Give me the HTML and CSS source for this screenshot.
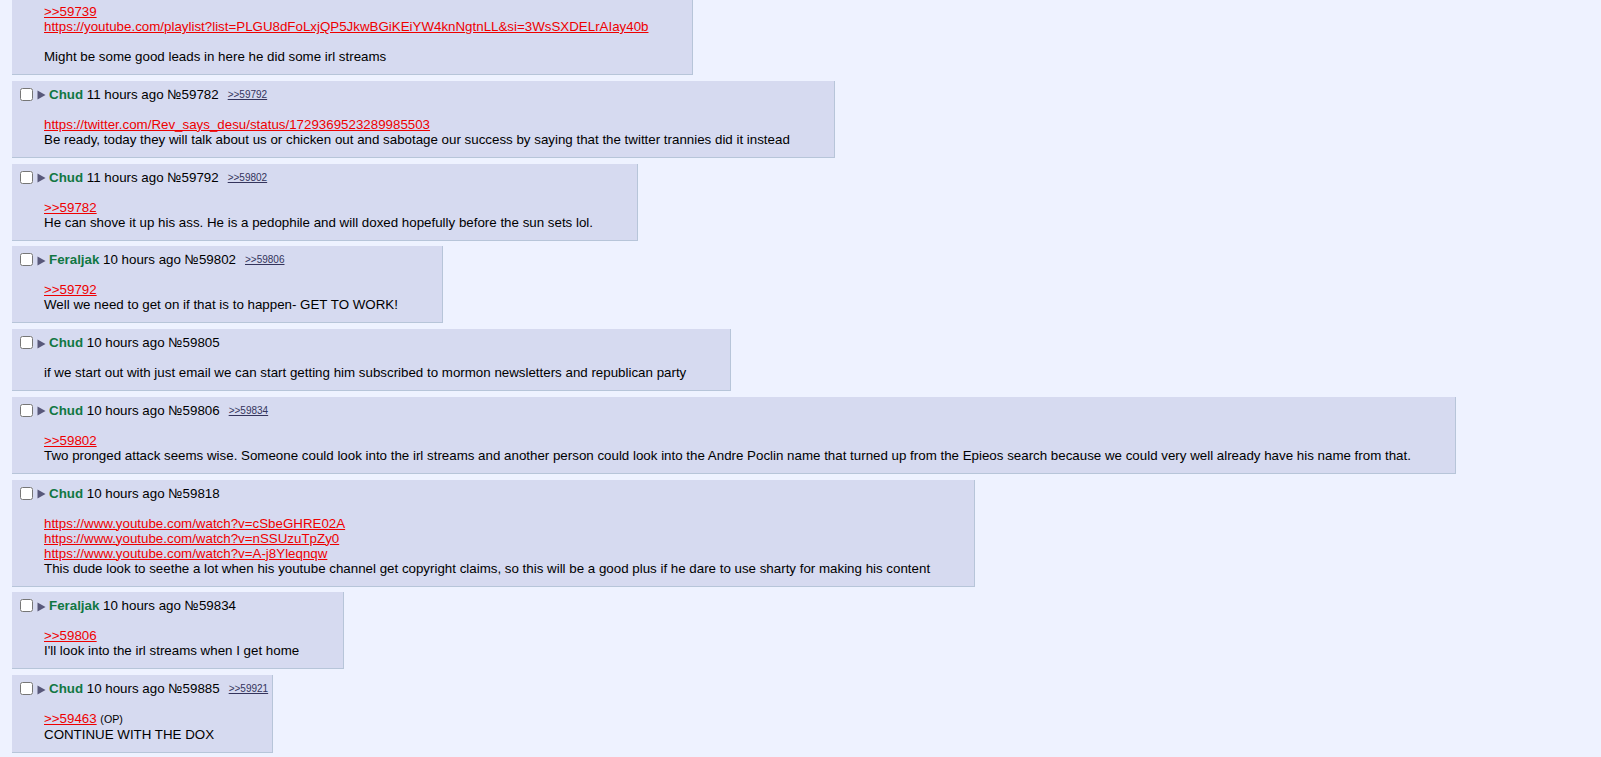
FILE: index.html
```html
<!DOCTYPE html>
<html>
<head>
<meta charset="utf-8">
<link rel="stylesheet" href="styles.css">
</head>
<body>
<div class="thread">
  <div class="post cut">
    <div class="body">
      <a class="quote" href="#">&gt;&gt;59739</a><br>
      <a class="quote" href="#">https://youtube.com/playlist?list=PLGU8dFoLxjQP5JkwBGiKEiYW4knNgtnLL&amp;si=3WsSXDELrAIay40b</a><br>
      <br>
      Might be some good leads in here he did some irl streams
    </div>
  </div>

  <div class="post">
    <div class="intro">
      <input type="checkbox" class="del">
      <svg class="arrow" width="9" height="10" viewBox="0 0 9 10"><path d="M0.5 0.5 L8.5 5 L0.5 9.5 Z"/></svg>
      <span class="name">Chud</span>&nbsp;<span class="time">11 hours ago</span>&nbsp;<span class="no">№59782</span>
      <a class="backlink" href="#">&gt;&gt;59792</a>
    </div>
    <div class="body">
      <a class="quote" href="#">https://twitter.com/Rev_says_desu/status/1729369523289985503</a><br>
      Be ready, today they will talk about us or chicken out and sabotage our success by saying that the twitter trannies did it instead
    </div>
  </div>

  <div class="post">
    <div class="intro">
      <input type="checkbox" class="del">
      <svg class="arrow" width="9" height="10" viewBox="0 0 9 10"><path d="M0.5 0.5 L8.5 5 L0.5 9.5 Z"/></svg>
      <span class="name">Chud</span>&nbsp;<span class="time">11 hours ago</span>&nbsp;<span class="no">№59792</span>
      <a class="backlink" href="#">&gt;&gt;59802</a>
    </div>
    <div class="body">
      <a class="quote" href="#">&gt;&gt;59782</a><br>
      He can shove it up his ass. He is a pedophile and will doxed hopefully before the sun sets lol.
    </div>
  </div>

  <div class="post">
    <div class="intro">
      <input type="checkbox" class="del">
      <svg class="arrow" width="9" height="10" viewBox="0 0 9 10"><path d="M0.5 0.5 L8.5 5 L0.5 9.5 Z"/></svg>
      <span class="name">Feraljak</span>&nbsp;<span class="time">10 hours ago</span>&nbsp;<span class="no">№59802</span>
      <a class="backlink" href="#">&gt;&gt;59806</a>
    </div>
    <div class="body">
      <a class="quote" href="#">&gt;&gt;59792</a><br>
      Well we need to get on if that is to happen- GET TO WORK!
    </div>
  </div>

  <div class="post">
    <div class="intro">
      <input type="checkbox" class="del">
      <svg class="arrow" width="9" height="10" viewBox="0 0 9 10"><path d="M0.5 0.5 L8.5 5 L0.5 9.5 Z"/></svg>
      <span class="name">Chud</span>&nbsp;<span class="time">10 hours ago</span>&nbsp;<span class="no">№59805</span>
    </div>
    <div class="body">
      if we start out with just email we can start getting him subscribed to mormon newsletters and republican party
    </div>
  </div>

  <div class="post">
    <div class="intro">
      <input type="checkbox" class="del">
      <svg class="arrow" width="9" height="10" viewBox="0 0 9 10"><path d="M0.5 0.5 L8.5 5 L0.5 9.5 Z"/></svg>
      <span class="name">Chud</span>&nbsp;<span class="time">10 hours ago</span>&nbsp;<span class="no">№59806</span>
      <a class="backlink" href="#">&gt;&gt;59834</a>
    </div>
    <div class="body">
      <a class="quote" href="#">&gt;&gt;59802</a><br>
      Two pronged attack seems wise. Someone could look into the irl streams and another person could look into the Andre Poclin name that turned up from the Epieos search because we could very well already have his name from that.
    </div>
  </div>

  <div class="post">
    <div class="intro">
      <input type="checkbox" class="del">
      <svg class="arrow" width="9" height="10" viewBox="0 0 9 10"><path d="M0.5 0.5 L8.5 5 L0.5 9.5 Z"/></svg>
      <span class="name">Chud</span>&nbsp;<span class="time">10 hours ago</span>&nbsp;<span class="no">№59818</span>
    </div>
    <div class="body">
      <a class="quote" href="#">https://www.youtube.com/watch?v=cSbeGHRE02A</a><br>
      <a class="quote" href="#">https://www.youtube.com/watch?v=nSSUzuTpZy0</a><br>
      <a class="quote" href="#">https://www.youtube.com/watch?v=A-j8Yleqnqw</a><br>
      This dude look to seethe a lot when his youtube channel get copyright claims, so this will be a good plus if he dare to use sharty for making his content
    </div>
  </div>

  <div class="post">
    <div class="intro">
      <input type="checkbox" class="del">
      <svg class="arrow" width="9" height="10" viewBox="0 0 9 10"><path d="M0.5 0.5 L8.5 5 L0.5 9.5 Z"/></svg>
      <span class="name">Feraljak</span>&nbsp;<span class="time">10 hours ago</span>&nbsp;<span class="no">№59834</span>
    </div>
    <div class="body">
      <a class="quote" href="#">&gt;&gt;59806</a><br>
      I'll look into the irl streams when I get home
    </div>
  </div>

  <div class="post">
    <div class="intro">
      <input type="checkbox" class="del">
      <svg class="arrow" width="9" height="10" viewBox="0 0 9 10"><path d="M0.5 0.5 L8.5 5 L0.5 9.5 Z"/></svg>
      <span class="name">Chud</span>&nbsp;<span class="time">10 hours ago</span>&nbsp;<span class="no">№59885</span>
      <a class="backlink" href="#">&gt;&gt;59921</a>
    </div>
    <div class="body">
      <a class="quote" href="#">&gt;&gt;59463</a> <span class="op">(OP)</span><br>
      CONTINUE WITH THE DOX
    </div>
  </div>
</div>
</body>
</html>
```

FILE: styles.css
```css
html, body {
  margin: 0;
  padding: 0;
  background: #eef2ff;
}

body {
  font-family: "Liberation Sans", Arial, sans-serif;
  font-size: 13.33px;
  color: #000;
  height: 757px;
  overflow: hidden;
}

.thread {
  display: flex;
  flex-direction: column;
  align-items: flex-start;
  gap: 5.75px;
  padding-left: 12px;
}

.post {
  background: #d6daf0;
  border-right: 1px solid #b7c5d9;
  border-bottom: 1px solid #b7c5d9;
  padding: 6px 4px 10px 4px;
  line-height: 15px;
}

.post.cut {
  padding-top: 4px;
}

.intro {
  display: flex;
  align-items: center;
  height: 15px;
  white-space: nowrap;
}

.del {
  width: 13px;
  height: 13px;
  margin: 0 4px 0 4px;
  flex: none;
}

.arrow {
  flex: none;
  fill: #58587a;
  margin: 2px 3px 0 0;
}

.name {
  color: #117743;
  font-weight: bold;
}

.backlink {
  color: #34345c;
  font-size: 10px;
  margin-left: 9px;
  text-decoration: underline;
}

.body {
  margin: 15px 0 0 28px;
  padding-right: 40px;
  white-space: nowrap;
}

.post.cut .body {
  margin-top: 0;
}

.quote {
  color: #e00;
  text-decoration: underline;
}

.op {
  font-size: 10.67px;
}
```
